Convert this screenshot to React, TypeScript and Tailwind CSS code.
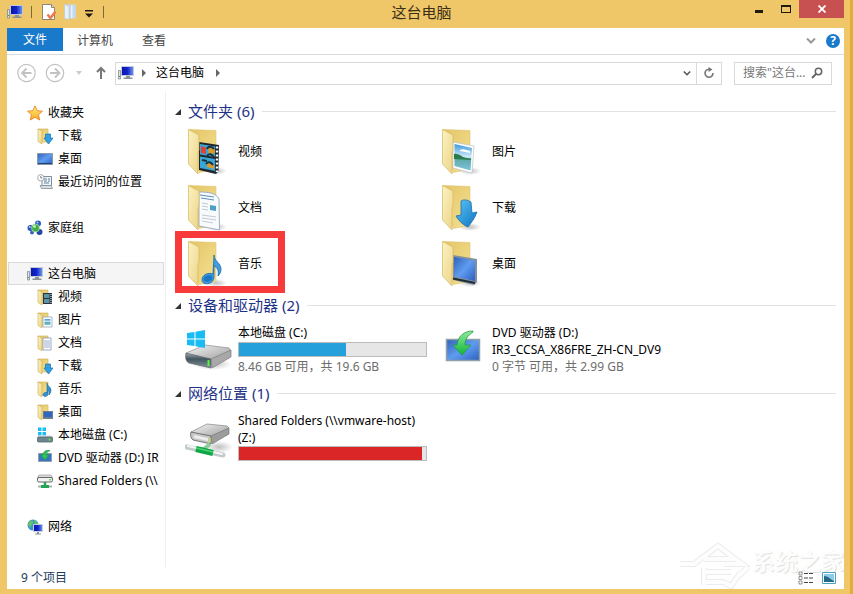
import { useState } from "react";
import type { ReactNode } from "react";

type IconProps = { className?: string };

type Kind = "video" | "picture" | "document" | "download" | "music" | "desktop";

const FOLDERS: { kind: Kind; label: string; marked?: boolean }[] = [
  { kind: "video", label: "视频" },
  { kind: "picture", label: "图片" },
  { kind: "document", label: "文档" },
  { kind: "download", label: "下载" },
  { kind: "music", label: "音乐", marked: true },
  { kind: "desktop", label: "桌面" },
];

/* ---------- shared gradients ---------- */

function Gradients() {
  return (
    <svg width="0" height="0" className="absolute" aria-hidden="true">
      <defs>
        <linearGradient id="folderBack" x1="0" y1="0" x2="1" y2="1">
          <stop offset="0" stopColor="#e3c566" />
          <stop offset="1" stopColor="#f5e093" />
        </linearGradient>
        <linearGradient id="folderFront" x1="0" y1="0" x2="1" y2="1">
          <stop offset="0" stopColor="#fbf2c2" />
          <stop offset="1" stopColor="#ecd488" />
        </linearGradient>
        <linearGradient id="blueArrow" x1="0" y1="0" x2="1" y2="1">
          <stop offset="0" stopColor="#5cc4f4" />
          <stop offset="1" stopColor="#0d74c4" />
        </linearGradient>
        <linearGradient id="screen" x1="0" y1="0" x2="1" y2="1">
          <stop offset="0" stopColor="#2f62b8" />
          <stop offset="0.5" stopColor="#5f9cf0" />
          <stop offset="1" stopColor="#2d5fc0" />
        </linearGradient>
        <linearGradient id="monitor" x1="0" y1="0" x2="1" y2="0">
          <stop offset="0" stopColor="#0a14a8" />
          <stop offset="0.5" stopColor="#1226c8" />
          <stop offset="1" stopColor="#6f9af4" />
        </linearGradient>
        <linearGradient id="sky" x1="0" y1="0" x2="0" y2="1">
          <stop offset="0" stopColor="#3c96dc" />
          <stop offset="0.5" stopColor="#d4eefa" />
          <stop offset="0.55" stopColor="#5fa8a8" />
          <stop offset="1" stopColor="#7cc4dc" />
        </linearGradient>
        <linearGradient id="metal" x1="0" y1="0" x2="1" y2="1">
          <stop offset="0" stopColor="#f6f6f6" />
          <stop offset="1" stopColor="#9a9a9a" />
        </linearGradient>
        <linearGradient id="darkMetal" x1="0" y1="0" x2="0" y2="1">
          <stop offset="0" stopColor="#a4abb0" />
          <stop offset="0.4" stopColor="#3f5560" />
          <stop offset="1" stopColor="#8a959c" />
        </linearGradient>
        <linearGradient id="greenArrow" x1="0" y1="0" x2="0" y2="1">
          <stop offset="0" stopColor="#8eea9a" />
          <stop offset="1" stopColor="#10b53a" />
        </linearGradient>
        <linearGradient id="star" x1="0" y1="0" x2="0" y2="1">
          <stop offset="0" stopColor="#fff27a" />
          <stop offset="1" stopColor="#f9a824" />
        </linearGradient>
        <radialGradient id="shade">
          <stop offset="0" stopColor="#000" stopOpacity="0.25" />
          <stop offset="1" stopColor="#000" stopOpacity="0" />
        </radialGradient>
      </defs>
    </svg>
  );
}

/* ---------- large icons ---------- */

const LARGE_OVERLAY: Record<Kind, ReactNode> = {
  video: (
    <>
      <path d="M11 14 31 17 30.500 43 28 46 11 42Z" fill="#20262c" />
      <path d="M12 16 27 18.500 27 29 12 26.500Z" fill="#38a7d8" />
      <path d="M12 28.500 27 31 27 43 12 40Z" fill="#38a7d8" />
      <path d="M13 18 18 19.500 18 26 13 25Z" fill="#d8433a" />
      <path d="M20 22a3.500 3.500 0 1 1 5 4l-4 1zM19 36c3-3 5-1 7 1v4l-7-2z" fill="#d89a2c" />
      <path d="M19 28c2-3 5-2 7 1M19 21c1-3 5-3 7 0M14 32l5 1M18 36c2-3 5-2 7 1" stroke="#17333f" strokeWidth="2" fill="none" />
      <path d="M29 18.500V44" stroke="#fff" strokeWidth="2.400" strokeDasharray="2 2" />
    </>
  ),
  picture: (
    <>
      <path d="M11 14 32 18 30 45 11 40Z" fill="#fff" stroke="#b7c3c9" strokeWidth="0.700" />
      <path d="M12.500 16 30 20 28.500 42.500 12.500 38Z" fill="url(#sky)" />
      <path d="M12 26c4-1 7 2 9 3s5 1 8 2v1l-17-1z" fill="#2b7b4d" />
      <path d="M18 22c3-2 6 0 10 1v2l-10-2z" fill="#fff" />
    </>
  ),
  document: (
    <>
      <path d="M11 8c10 0 17 1 20 7l.500 31L11 42Z" fill="#f8fafc" stroke="#9fb0c2" />
      <path d="M12 11l14 2M13 14l13 2" stroke="#5f90ba" strokeWidth="1.200" />
      <path d="M14 19l6 1M14 22l6 1M14 25l6 1M14 31l14 2M14 34l14 2M14 37l11 2" stroke="#c3cad4" />
      <path d="M22 21l6 1v5l-6-1Z" fill="#4aa0c8" />
    </>
  ),
  download: (
    <path
      d="M19 17c3-2 7-1 10 1l1 11 5-1c-2 6-6 11-9 15-5-2-9-6-12-11l5-1Z"
      fill="url(#blueArrow)"
      stroke="#1b6fae"
      strokeWidth="0.800"
    />
  ),
  music: (
    <>
      <path
        d="M26 15c0 6 7 8 7 14 0 3-1 5-3 7 1-6-1-9-4-10v11c0 8-12 9-12 3 0-5 6-8 11-6Z"
        fill="#3d9ee0"
        stroke="#1b68ac"
        strokeWidth="0.800"
      />
      <ellipse cx="20" cy="38.500" rx="4.500" ry="3.200" fill="#1c78c4" transform="rotate(-16 20 38.500)" />
    </>
  ),
  desktop: (
    <>
      <path d="M11 15 35 19 35 42 32 45 11 40Z" fill="#84909a" />
      <path d="M12 17 33 20.500 33 41 12 36.500Z" fill="url(#screen)" />
      <path d="M11 38.500 33 43" stroke="#1f2d3c" strokeWidth="2" />
    </>
  ),
};

function LargeFolder({ kind }: { kind: Kind }) {
  return (
    <svg viewBox="0 0 40 48" className="h-12 w-10 shrink-0" aria-hidden="true">
      <ellipse cx="28" cy="43" rx="11" ry="4" fill="url(#shade)" />
      <path d="M1 1.500 28 2.500v39l-17 3Z" fill="url(#folderBack)" stroke="#d9bd62" strokeWidth="0.500" />
      {LARGE_OVERLAY[kind]}
      <path d="M0.500 1.500 11 7v15l-1 2v22L0.500 36Z" fill="url(#folderFront)" stroke="#d5b95c" strokeWidth="0.700" />
    </svg>
  );
}

function LocalDiskLarge() {
  return (
    <svg viewBox="0 0 48 44" className="h-11 w-12 shrink-0" aria-hidden="true">
      <ellipse cx="27" cy="36" rx="20" ry="6" fill="url(#shade)" />
      <path d="M1 25 20 17 44 20 46 23 26 33 3 30Z" fill="url(#metal)" stroke="#8b8b8b" strokeWidth="0.700" />
      <path d="M1 25 26 31v9L4 35C1 34 0 29 1 25Z" fill="url(#darkMetal)" stroke="#5b646a" strokeWidth="0.700" />
      <path d="M26 31 46 22v7L27 40Z" fill="#a8a8a8" stroke="#7c7c7c" strokeWidth="0.700" />
      <path d="M23.500 32v6" stroke="#5df03c" strokeWidth="2" />
      <path d="M2 5 9.500 4v6.500H2zM10.500 3.800 20 2v8.500h-9.500zM2 11.500h7.500V18L2 17zM10.500 11.500H20V20l-9.500-1.700z" fill="#17bdf2" />
    </svg>
  );
}

function DvdLarge() {
  return (
    <svg viewBox="0 0 44 44" className="size-11 shrink-0" aria-hidden="true">
      <rect x="7.500" y="11.500" width="33" height="21" fill="url(#screen)" stroke="#8fa0ab" strokeWidth="1.500" />
      <path d="M34 3c-9 0-15 5-16 14h-4l9 10 9-10h-6c0-5 2-9 8-13Z" fill="url(#greenArrow)" stroke="#239a45" strokeWidth="0.800" />
    </svg>
  );
}

function NetworkDriveLarge() {
  return (
    <svg viewBox="0 0 48 44" className="h-11 w-12 shrink-0" aria-hidden="true">
      <ellipse cx="34" cy="29" rx="14" ry="6" fill="url(#shade)" />
      <path d="M6 14 22 6 42 8 44 10 26 20 8 19Z" fill="url(#metal)" stroke="#858585" strokeWidth="0.700" />
      <path d="M6 14 26 18v8L8 22C6 21 5 17 6 14Z" fill="#c6c6c6" stroke="#5d5d5d" strokeWidth="0.800" />
      <path d="M9 17 23 20v3L9 20Z" fill="#ededed" />
      <path d="M26 18 44 10v6L27 26Z" fill="#9c9c9c" stroke="#777" strokeWidth="0.700" />
      <path d="M25 20v4" stroke="#b8e04a" strokeWidth="1.500" />
      <path d="M2 29 38 37" stroke="#c2cacd" strokeWidth="5" strokeLinecap="round" />
      <path d="M3 28 37 36" stroke="#f4f6f7" strokeWidth="2" strokeLinecap="round" />
      <path d="M19 31 25 26" stroke="#8ccf9c" strokeWidth="4" />
      <path d="M11 31 28 35" stroke="#10a545" strokeWidth="6" />
      <path d="M11 30 28 34" stroke="#49d277" strokeWidth="1.500" />
    </svg>
  );
}

/* ---------- small icons ---------- */

const SMALL_OVERLAY: Record<Kind, ReactNode> = {
  video: (
    <>
      <path d="M6 4h9v11H6z" fill="#2b3238" />
      <path d="M7 5h5.500v4H7zM7 10h5.500v4H7z" fill="#5a93ac" />
      <path d="M14 5v10" stroke="#fff" strokeDasharray="1 1" />
    </>
  ),
  picture: (
    <>
      <path d="M6 5h9v10H6z" fill="#fff" stroke="#8fa7b8" strokeWidth="0.800" />
      <path d="M7.500 7h6v6h-6z" fill="url(#sky)" />
    </>
  ),
  document: (
    <>
      <path d="M6 3h8v12H6z" fill="#fff" stroke="#8495b8" strokeWidth="0.800" />
      <path d="M7 6h6M7 8h6M7 10h6M7 12h6" stroke="#8197c4" strokeWidth="0.800" />
    </>
  ),
  download: <path d="M8.500 6h5v4H16l-4.500 6L7 10h1.500Z" fill="#2ea0e4" stroke="#1a6eae" strokeWidth="0.700" />,
  music: <path d="M10 2c0 3 4 4 4 7 0 2-1 4-2 5 .500-3 0-4-1-5v4c0 3-5 3-5 1s2-3 4-2.500Z" fill="#2f93d8" stroke="#1b68a4" strokeWidth="0.600" />,
  desktop: (
    <>
      <path d="M6 7h10v8H6z" fill="#6d7d8c" />
      <path d="M7 8h8v5H7z" fill="#2e66c4" />
    </>
  ),
};

function SmallSvg({ children, className = "size-4" }: { children: ReactNode } & IconProps) {
  return (
    <svg viewBox="0 0 16 16" className={`${className} shrink-0`} aria-hidden="true">
      {children}
    </svg>
  );
}

function SmallFolder({ kind }: { kind: Kind }) {
  return (
    <SmallSvg>
      <path d="M1 1h10v13H4Z" fill="url(#folderBack)" stroke="#cfae52" strokeWidth="0.600" />
      {SMALL_OVERLAY[kind]}
      <path d="M1 1 5 3v13l-4-2.500Z" fill="url(#folderFront)" stroke="#cfae52" strokeWidth="0.600" />
    </SmallSvg>
  );
}

function ComputerIcon({ className }: IconProps) {
  return (
    <SmallSvg className={className}>
      <path d="M.500 5.500h2V14h-2z" fill="#dfe3e5" stroke="#7f8d90" strokeWidth="0.800" />
      <path d="M1 11.500h1" stroke="#3aa04a" />
      <path d="M3.500 1.500h12v9h-12z" fill="url(#monitor)" stroke="#c4c9d8" />
      <path d="M8 11h4v1.500h2.500V14h-9v-1.500H8Z" fill="#8c9396" />
    </SmallSvg>
  );
}

function StarIcon() {
  return (
    <SmallSvg>
      <path d="m8 .800 2.200 4.900 5.300.500-4 3.500 1.200 5.300L8 12.300 3.300 15l1.200-5.300-4-3.500 5.300-.500Z" fill="url(#star)" stroke="#e8862a" strokeWidth="0.900" strokeLinejoin="round" />
    </SmallSvg>
  );
}

function DesktopIcon() {
  return (
    <SmallSvg>
      <path d="M.500 2.500h15v11H.500z" fill="url(#screen)" stroke="#8a99a6" />
      <path d="M1 12.500h14" stroke="#22406c" />
    </SmallSvg>
  );
}

function RecentIcon() {
  return (
    <SmallSvg>
      <path d="M5 2.500h9.500v9H5z" fill="#f2f6f8" stroke="#7e8f9b" />
      <path d="M7 5h3M11 5h2M7 7h3M11 7h2M7 9h5" stroke="#5c8098" />
      <path d="M3 11.500h11l1.500 3H4.500Z" fill="#d9dfe2" stroke="#7e8f9b" strokeWidth="0.800" />
      <circle cx="3.800" cy="3.800" r="3.200" fill="#fff" stroke="#8d979d" strokeWidth="0.800" />
      <path d="M3.800 2v2h1.500" fill="none" stroke="#5b666c" strokeWidth="0.800" />
    </SmallSvg>
  );
}

function HomegroupIcon() {
  return (
    <SmallSvg>
      <circle cx="3.500" cy="8" r="3" fill="#2c56b4" />
      <circle cx="11" cy="3.500" r="3" fill="#2d5cc0" />
      <circle cx="12.500" cy="12" r="3" fill="#2448a4" />
      <circle cx="5" cy="12.500" r="2" fill="#3463c4" />
      <circle cx="8.500" cy="8" r="4" fill="#3fae45" stroke="#d9f0d8" strokeWidth="0.600" />
      <circle cx="7.500" cy="6.500" r="1.400" fill="#c5f0b8" />
      <circle cx="2.800" cy="7" r="1" fill="#a9c6f4" />
      <circle cx="10.500" cy="2.500" r="1" fill="#a9c6f4" />
    </SmallSvg>
  );
}

function DiskIcon() {
  return (
    <SmallSvg>
      <path d="M1 .500h3.500V4H1zM5.500.500H9V4H5.500zM1 5h3.500v3.500H1zM5.500 5H9v3.500H5.500z" fill="#19bdf0" />
      <path d="M2 8.500h12l1.500 2H.500Z" fill="#d5d9db" />
      <rect x="0.500" y="10" width="15" height="5" rx="1" fill="#6d8790" stroke="#59686e" strokeWidth="0.800" />
      <path d="M12.500 11.500v2" stroke="#5df03c" strokeWidth="1.500" />
    </SmallSvg>
  );
}

function DvdIcon() {
  return (
    <SmallSvg>
      <path d="M1.500 3.500h13v8h-13z" fill="#3c74c4" stroke="#8fa0ab" />
      <path d="M12 .300C8 .300 6 2 6 5H3.500L8 10l4-5H9.500C9 3.500 10 1.500 13 .800Z" fill="#2fc455" stroke="#229544" strokeWidth="0.600" />
    </SmallSvg>
  );
}

function SharedIcon() {
  return (
    <SmallSvg>
      <path d="M2 2h12l1.500 2.500H.500Z" fill="#dcdcdc" stroke="#8a8a8a" strokeWidth="0.600" />
      <rect x="0.500" y="4.500" width="15" height="4.500" rx="1.500" fill="#f2f2f2" stroke="#686868" />
      <path d="M13 6v1.500" stroke="#44c23a" strokeWidth="1.500" />
      <path d="M8 9v4" stroke="#2aa557" strokeWidth="2.500" />
      <path d="M1 13.500h14" stroke="#a9b4b2" strokeWidth="2" />
      <path d="M4 13.500h8" stroke="#22a552" strokeWidth="3" />
    </SmallSvg>
  );
}

function NetworkIcon() {
  return (
    <SmallSvg>
      <circle cx="6" cy="6" r="5.500" fill="#3495d0" />
      <path d="M3 2c2-1 4 0 3 2S4 6 4 8 1 6 1 5s1-2 2-3zM7 1c2 0 4 2 4 4H8z" fill="#67c46c" />
      <path d="M6.500 5.500h9v7h-9z" fill="url(#monitor)" stroke="#c9ced8" />
      <path d="M10 13h2v1.500h2v1H8v-1h2z" fill="#8c9396" />
    </SmallSvg>
  );
}

function Chevron({ className }: IconProps) {
  return (
    <svg viewBox="0 0 10 8" className={className} fill="none" stroke="currentColor" strokeWidth="2" aria-hidden="true">
      <path d="m1 1.500 4 4 4-4" />
    </svg>
  );
}

/* ---------- window chrome ---------- */

function TitleBar() {
  return (
    <header className="grid h-7 grid-cols-[1fr_auto_1fr] items-start">
      <div className="flex h-6 items-center">
        <ComputerIcon className="size-4" />
        <span className="ml-2 h-3 w-px bg-[#7b6a40]" />
        <button type="button" aria-label="属性" className="ml-2.5">
          <svg viewBox="0 0 14 16" className="h-4 w-3.5" aria-hidden="true">
            <path d="M.500.500h9l3 3v12H.500z" fill="#fff" stroke="#8d8674" />
            <path d="M9.500.500v3h3" fill="#ddd" stroke="#8d8674" />
            <path d="m5.500 10.500 3 3.500 5-6.500" fill="none" stroke="#ea7a50" strokeWidth="2.600" />
          </svg>
        </button>
        <button type="button" aria-label="新建文件夹" className="ml-2">
          <svg viewBox="0 0 13 16" className="h-4 w-[13px]" aria-hidden="true">
            <path d="M.500.500H12v14H4Z" fill="#c3d8ea" />
            <path d="M.500.500 5 2v13.500l-4.500-1Z" fill="#e6f0f8" stroke="#b3cadd" strokeWidth="0.600" />
            <path d="M7 1.500h1.500V14H7z" fill="#eaf3fa" />
          </svg>
        </button>
        <button type="button" aria-label="自定义快速访问工具栏" className="ml-2 mt-1">
          <svg viewBox="0 0 8 8" className="size-2" aria-hidden="true">
            <path d="M0 0h8v1.500H0zM0 3.500h8L4 7.500z" fill="#1d1a12" />
          </svg>
        </button>
        <span className="ml-2.5 h-3 w-px bg-[#7b6a40]" />
      </div>
      <h1 className="pr-2 pt-px text-[15px] leading-[22px] text-[#3b3017]">这台电脑</h1>
      <div className="flex h-[18px] justify-end">
        <button type="button" aria-label="最小化" className="flex w-7 items-center justify-center">
          <span className="mt-1 h-[3px] w-2 bg-[#1f1a0e]" />
        </button>
        <button type="button" aria-label="最大化" className="flex w-[26px] items-center justify-center">
          <span className="h-2 w-2.5 border border-t-2 border-[#1f1a0e]" />
        </button>
        <button type="button" aria-label="关闭" className="flex w-[45px] items-center justify-center bg-[#c75050]">
          <svg viewBox="0 0 8 8" className="size-2" stroke="#fff" strokeWidth="1.800" aria-hidden="true">
            <path d="m.500.500 7 7M7.500.500l-7 7" />
          </svg>
        </button>
      </div>
    </header>
  );
}

function Ribbon() {
  return (
    <div className="flex h-[27px] items-start border-b border-[#dadbdc] text-[#444]">
      <button type="button" className="h-[23px] w-14 bg-[#1979ca] text-white">文件</button>
      <button type="button" className="h-[26px] w-16">计算机</button>
      <button type="button" className="h-[26px] w-[54px]">查看</button>
      <div className="ml-auto flex h-[26px] items-center gap-2.5 pr-1">
        <button type="button" aria-label="展开功能区">
          <Chevron className="h-2 w-2.5 text-[#999]" />
        </button>
        <button type="button" aria-label="帮助" className="size-3.5 rounded-full bg-[#1979ca] text-[12px] font-bold leading-[14px] text-white">?</button>
      </div>
    </div>
  );
}

function AddressRow() {
  const [query, setQuery] = useState("");

  return (
    <div className="flex h-9 items-center pl-2.5 pr-3">
      <button type="button" aria-label="后退">
        <svg viewBox="0 0 20 20" className="size-5" fill="none" stroke="#c2c2c2" aria-hidden="true">
          <circle cx="9.500" cy="10" r="8.700" strokeWidth="1.200" />
          <path d="M14.500 10h-9M9.500 5.500 5 10l4.500 4.500" strokeWidth="1.800" />
        </svg>
      </button>
      <button type="button" aria-label="前进" className="ml-2">
        <svg viewBox="0 0 20 20" className="size-5" fill="none" stroke="#c2c2c2" aria-hidden="true">
          <circle cx="10" cy="10" r="8.700" strokeWidth="1.200" />
          <path d="M5 10h9M10 5.500l4.500 4.500-4.500 4.500" strokeWidth="1.800" />
        </svg>
      </button>
      <button type="button" aria-label="最近浏览的位置" className="ml-2.5">
        <svg viewBox="0 0 8 5" className="h-[5px] w-2" aria-hidden="true"><path d="M1 0h6L4 4z" fill="#ccc" /></svg>
      </button>
      <button type="button" aria-label="上移" className="ml-3">
        <svg viewBox="0 0 12 14" className="h-3.5 w-3" fill="none" stroke="#777" strokeWidth="2" aria-hidden="true">
          <path d="M6 13V2M2 6l4-4 4 4" />
        </svg>
      </button>
      <nav aria-label="地址" className="ml-2 flex h-[23px] flex-1 items-center border border-[#d9d9d9] pl-0.5">
        <ComputerIcon className="size-4" />
        <svg viewBox="0 0 4 8" className="ml-2 h-2 w-1" aria-hidden="true"><path d="M0 0v8l4-4z" fill="#666" /></svg>
        <a href="#this-pc" className="ml-2.5 text-black">这台电脑</a>
        <svg viewBox="0 0 4 8" className="ml-3 h-2 w-1" aria-hidden="true"><path d="M0 0v8l4-4z" fill="#666" /></svg>
        <button type="button" aria-label="以前的位置" className="ml-auto flex h-full w-[18px] items-center justify-center">
          <Chevron className="h-[7px] w-2 text-[#555]" />
        </button>
        <button type="button" aria-label="刷新" className="flex h-full w-[25px] items-center justify-center border-l border-[#d9d9d9]">
          <svg viewBox="0 0 12 12" className="size-3" fill="none" stroke="#777" strokeWidth="1.600" aria-hidden="true">
            <path d="M7.500 2.500A4 4 0 1 0 10 6" />
            <path d="M5.500 0v5l4-2.500z" fill="#777" stroke="none" />
          </svg>
        </button>
      </nav>
      <label className="ml-3 flex h-[23px] w-[98px] items-center border border-[#d9d9d9] pl-2 pr-2">
        <input
          type="text"
          aria-label="搜索"
          value={query}
          onChange={(e) => setQuery(e.target.value)}
          placeholder={'搜索"这台...'}
          className="w-0 flex-1 bg-transparent outline-none placeholder:text-[#777]"
        />
        <svg viewBox="0 0 12 12" className="size-3" fill="none" stroke="#666" aria-hidden="true">
          <circle cx="7.500" cy="4.500" r="3.200" strokeWidth="1.500" />
          <path d="M5 7 1 11" strokeWidth="2" />
        </svg>
      </label>
    </div>
  );
}

/* ---------- sidebar ---------- */

function RootLink({ icon, label, active }: { icon: ReactNode; label: string; active?: boolean }) {
  return (
    <a
      href="#root"
      className={`flex h-[23px] items-center gap-[5px] border pl-[18px] ${active ? "border-[#dadada] bg-[#f5f5f5]" : "border-transparent"}`}
    >
      {icon}
      {label}
    </a>
  );
}

function ChildLink({ icon, label }: { icon: ReactNode; label: string }) {
  return (
    <a href="#child" className="flex h-[23px] items-center gap-[5px] whitespace-nowrap pl-[29px]">
      {icon}
      {label}
    </a>
  );
}

function Sidebar() {
  return (
    <nav aria-label="导航" className="flex w-[159px] shrink-0 flex-col gap-[23px] border-r border-[#f0f0f0] pl-px pr-px pt-[10px]">
      <div>
        <RootLink icon={<StarIcon />} label="收藏夹" />
        <ChildLink icon={<SmallFolder kind="download" />} label="下载" />
        <ChildLink icon={<DesktopIcon />} label="桌面" />
        <ChildLink icon={<RecentIcon />} label="最近访问的位置" />
      </div>
      <RootLink icon={<HomegroupIcon />} label="家庭组" />
      <div>
        <RootLink icon={<ComputerIcon />} label="这台电脑" active />
        {FOLDERS.map((f) => (
          <ChildLink key={f.kind} icon={<SmallFolder kind={f.kind} />} label={f.label} />
        ))}
        <ChildLink icon={<DiskIcon />} label="本地磁盘 (C:)" />
        <ChildLink icon={<DvdIcon />} label="DVD 驱动器 (D:) IR" />
        <ChildLink icon={<SharedIcon />} label={"Shared Folders (\\\\"} />
      </div>
      <RootLink icon={<NetworkIcon />} label="网络" />
    </nav>
  );
}

/* ---------- content ---------- */

function Group({ title, children }: { title: string; children: ReactNode }) {
  return (
    <section>
      <h2 className="flex h-[25px] items-center text-[15px] leading-5 text-[#1e3287]">
        <svg viewBox="0 0 6 6" className="mr-[7px] size-1.5" aria-hidden="true"><path d="M6 0v6H0z" fill="#333" /></svg>
        <span className="pb-0.5">{title}</span>
        <span className="ml-2 h-px flex-1 bg-[#e2e2e2]" />
      </h2>
      {children}
    </section>
  );
}

function UsageBar({ label, value, color }: { label: string; value: number; color: string }) {
  return (
    <div
      role="progressbar"
      aria-label={label}
      aria-valuenow={value}
      className="h-[15px] w-[189px] border border-[#bcbcbc] bg-[#e6e6e6]"
    >
      <div className={`h-full ${color}`} style={{ width: `${value}%` }} />
    </div>
  );
}

function Content() {
  return (
    <main className="min-w-0 flex-1 pl-[9px] pr-2 pt-2">
      <Group title="文件夹 (6)">
        <ul className="grid grid-cols-[254px_1fr] pb-px pl-[13px]">
          {FOLDERS.map((f) => (
            <li key={f.kind} className="relative flex h-14 items-center gap-2.5">
              <LargeFolder kind={f.kind} />
              {f.label}
              {f.marked && <span className="absolute -bottom-px -left-[13px] -top-[5px] w-[110px] border-[7px] border-[#f83a3a]" />}
            </li>
          ))}
        </ul>
      </Group>

      <Group title="设备和驱动器 (2)">
        <div className="grid grid-cols-[254px_1fr] pb-[5px] pl-[10px] pt-1.5">
          <div className="flex gap-[5px]">
            <div className="pt-1"><LocalDiskLarge /></div>
            <div>
              <p className="leading-[18px]">本地磁盘 (C:)</p>
              <UsageBar label="本地磁盘" value={57} color="bg-[#26a0da]" />
              <p className="pt-px leading-[18px] text-[#6d6d6d]">8.46 GB 可用，共 19.6 GB</p>
            </div>
          </div>
          <div className="flex gap-[9px]">
            <div className="pt-1"><DvdLarge /></div>
            <div className="leading-[17px]">
              <p>DVD 驱动器 (D:)</p>
              <p>IR3_CCSA_X86FRE_ZH-CN_DV9</p>
              <p className="text-[#6d6d6d]">0 字节 可用，共 2.99 GB</p>
            </div>
          </div>
        </div>
      </Group>

      <Group title="网络位置 (1)">
        <div className="flex gap-[5px] pl-[10px] pt-1.5">
          <div className="pt-1.5"><NetworkDriveLarge /></div>
          <div>
            <p className="leading-[17px]">Shared Folders (\\vmware-host)<br />(Z:)</p>
            <UsageBar label="Shared Folders" value={98} color="bg-[#da2626]" />
          </div>
        </div>
      </Group>
    </main>
  );
}

function Watermark() {
  return (
    <div className="pointer-events-none absolute bottom-0 right-0 flex items-center text-[#fdfdfd]" aria-hidden="true">
      <svg viewBox="0 0 74 48" className="h-12 w-[74px]" fill="none">
        <g stroke="#ececec" strokeWidth="6">
          <path d="M2 23h14l24-18 24 18H46M26 18h30M26 27v17M27 31h26M27 41h18l8 4 10-14M60 20l6 4M62 34l8-8" />
        </g>
        <g stroke="#fdfdfd" strokeWidth="4">
          <path d="M2 23h14l24-18 24 18H46M26 18h30M26 27v17M27 31h26M27 41h18l8 4 10-14M60 20l6 4M62 34l8-8" />
        </g>
      </svg>
      <p className="pb-2 text-[23px] font-bold leading-7 [text-shadow:1px_1px_1px_#dedede]">系统之家</p>
    </div>
  );
}

function StatusBar() {
  return (
    <footer className="relative flex h-[22px] items-center justify-between pl-3.5 pr-2 text-[#1e3a5c]">
      <span>9 个项目</span>
      <Watermark />
      <div className="relative flex items-center gap-2">
        <button type="button" aria-label="详细信息">
          <svg viewBox="0 0 16 14" className="h-3.5 w-4" aria-hidden="true">
            <path d="M1 1h3v3H1zM1 5.500h3v3H1zM1 10h3v3H1z" fill="#fff" stroke="#777" strokeWidth="0.800" />
            <path d="M6 2.500h9M6 7h9M6 11.500h9" stroke="#444" strokeDasharray="4 1" />
          </svg>
        </button>
        <button type="button" aria-label="大图标">
          <svg viewBox="0 0 14 12" className="h-3 w-3.5" aria-hidden="true">
            <path d="M.500.500h13v11H.500z" fill="#fff" stroke="#4aa3c7" />
            <path d="M2 2h10v8H2z" fill="#8fcbe6" />
            <path d="M2 4c4 0 6 3 10 5v1H2z" fill="#246a86" />
          </svg>
        </button>
      </div>
    </footer>
  );
}

export default function App() {
  return (
    <div className="flex min-h-screen flex-col border-r-[3px] border-[#e0ae31] bg-[#efc768] pb-[5px] pl-[7px] pr-[6px] font-['Noto_Sans','Noto_Sans_CJK_SC',sans-serif] text-[12px] leading-4 text-black">
      <Gradients />
      <TitleBar />
      <div className="flex flex-1 flex-col bg-white">
        <Ribbon />
        <AddressRow />
        <div className="flex flex-1">
          <Sidebar />
          <Content />
        </div>
        <StatusBar />
      </div>
    </div>
  );
}
